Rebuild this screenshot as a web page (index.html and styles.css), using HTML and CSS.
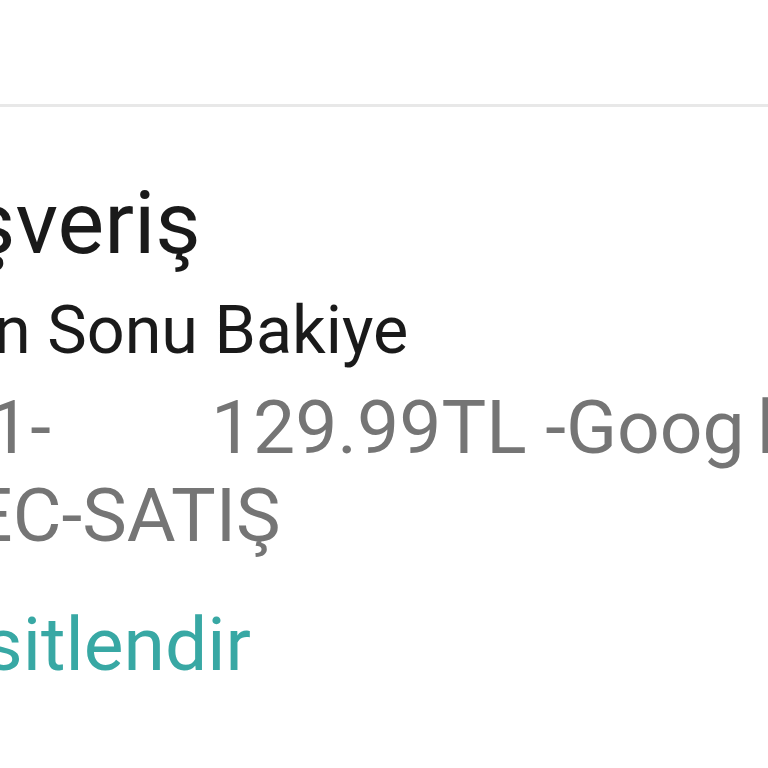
FILE: index.html
```html
<!DOCTYPE html>
<html lang="tr">
<head>
<meta charset="utf-8">
<link rel="stylesheet" href="styles.css">
</head>
<body>
<div class="page">
  <div class="top"></div>
  <div class="divider"></div>
  <div class="card">
    <div class="title">şveriş</div>
    <div class="subtitle">n Sonu Bakiye</div>
    <div class="detail"><span class="d1">1-</span><span class="d2">129.99TL -Goog<span class="tail">le</span></span></div>
    <div class="detail d-second">EC-SATIŞ</div>
    <div class="action">sitlendir</div>
  </div>
</div>
</body>
</html>
```
FILE: styles.css
```css
html, body {
  margin: 0;
  padding: 0;
  background: #ffffff;
}
.page {
  width: 768px;
  height: 768px;
  overflow: hidden;
  font-family: Roboto, "Noto Sans", sans-serif;
}
.top {
  height: 104px;
}
.divider {
  height: 3px;
  background: #e8e8e8;
}
.card {
  white-space: nowrap;
  padding-top: 61px;
}
.title {
  font-size: 88px;
  line-height: 110px;
  color: #1a1a1a;
  margin-left: -30px;
}
.subtitle {
  font-size: 66.5px;
  line-height: 105px;
  color: #1a1a1a;
  margin-left: -6px;
}
.detail {
  font-size: 75px;
  line-height: 88px;
  color: #757575;
}
.d1 {
  margin-left: -12px;
}
.d2 {
  margin-left: 160px;
}
.tail {
  margin-left: 12px;
}
.d-second {
  margin-left: -30px;
}
.action {
  font-size: 75px;
  line-height: 88px;
  margin-top: 41px;
  color: #38a8a4;
  margin-left: -16px;
}
```
